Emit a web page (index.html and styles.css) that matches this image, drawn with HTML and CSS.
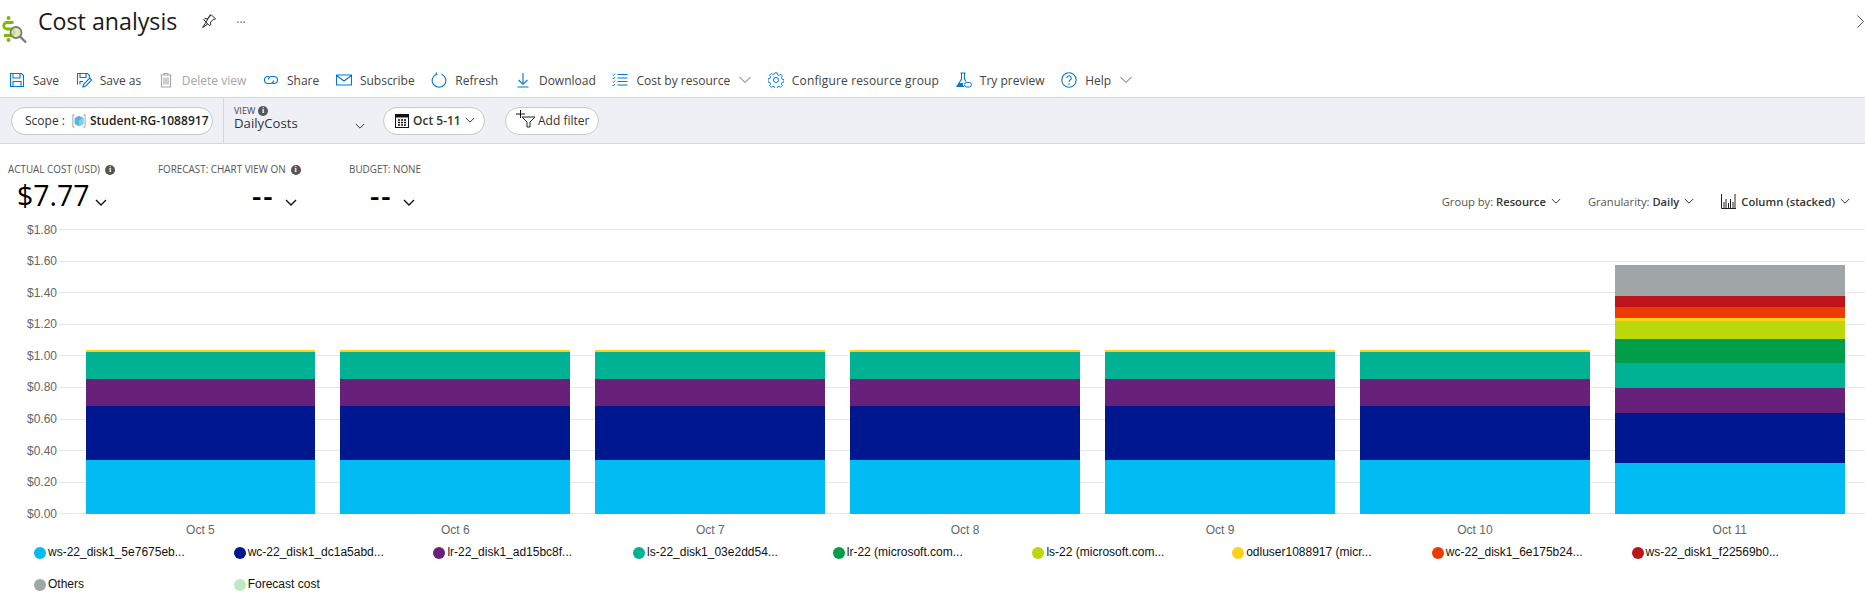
FILE: index.html
```html
<!DOCTYPE html>
<html lang="en">
<head>
<meta charset="utf-8">
<title>Cost analysis</title>
<link rel="stylesheet" href="styles.css">
</head>
<body>
<header class="title-row">
  <svg class="logo" viewBox="0 0 28 32" width="28" height="32">
    <path d="M11.500 8.500H5a3 3 0 0 0 0 6.500h4a3.200 3.200 0 0 1 0 6.500H2" fill="none" stroke="#7fba00" stroke-width="2.800"/>
    <circle cx="6.500" cy="4" r="2" fill="#7fba00"/>
    <circle cx="6.500" cy="26" r="2" fill="#7fba00"/>
    <circle cx="14" cy="18.500" r="5.500" fill="#d7e8a8" fill-opacity=".8" stroke="#7a7a7a" stroke-width="1.800"/>
    <path d="M18 22.500l6 6" stroke="#7a7a7a" stroke-width="2.400"/>
  </svg>
  <h1 class="title">Cost analysis</h1>
  <svg class="pin" viewBox="0 0 16 16" width="16" height="16"><path d="M10 1.500l4.500 4.500-1 .6-1-.4-3 3 .2 2.600-1 1L5 9.200 1.600 14.500 6.800 11 M5 9.200l-2.200-2.600 1-1 2.700.2 3-3-.3-1z" fill="none" stroke="#222" stroke-width="1"/></svg>
  <span class="more">···</span>
  <svg class="close" viewBox="0 0 7 13" width="7" height="13"><path d="M.5.500l6 6-6 6" fill="none" stroke="#555" stroke-width="1"/></svg>
</header>

<nav class="toolbar">
  <span class="tool"><svg class="ti" viewBox="0 0 16 16"><path d="M1.500 1.500h11l2 2v11h-13zM4 1.500v4.500h7V1.500M4 14.500V9.500h8v5" fill="none" stroke="#0078d4" stroke-width="1.100"/></svg>Save</span>
  <span class="tool"><svg class="ti" viewBox="0 0 16 16"><path d="M1.500 12.500v-11h10l2 2v3M4 1.500v4h6v-4M4 12.500v-3h3" fill="none" stroke="#0078d4" stroke-width="1.100"/><path d="M7 15l.8-3 6-6 2 2-6 6z" fill="none" stroke="#0078d4" stroke-width="1.100"/></svg>Save as</span>
  <span class="tool off"><svg class="ti" viewBox="0 0 16 16"><path d="M2.500 3h11M6 3V1.500h4V3M3.500 3v12h9V3M6 5.500v7M8 5.500v7M10 5.500v7" fill="none" stroke="#a6a6a6" stroke-width="1.100"/></svg>Delete view</span>
  <span class="tool"><svg class="ti" viewBox="0 0 16 16"><path d="M6 4.500H5a3.500 3.500 0 0 0 0 7h2.500a3 3 0 0 0 3-3M10 11.500h1a3.500 3.500 0 0 0 0-7H8.500a3 3 0 0 0-3 3" fill="none" stroke="#0078d4" stroke-width="1.100"/></svg>Share</span>
  <span class="tool"><svg class="ti" viewBox="0 0 16 16"><path d="M.5 3h15v10H.5zM.5 3.500L8 9l7.500-5.500" fill="none" stroke="#0078d4" stroke-width="1.100"/></svg>Subscribe</span>
  <span class="tool"><svg class="ti" viewBox="0 0 16 16"><path d="M5.500 2.200a6.800 6.800 0 1 0 5 0M5 .5l.8 2-2 .8" fill="none" stroke="#0078d4" stroke-width="1.100"/></svg>Refresh</span>
  <span class="tool"><svg class="ti" viewBox="0 0 16 16"><path d="M8 1v11M3.500 8L8 12.300 12.500 8M2.500 15h11" fill="none" stroke="#0078d4" stroke-width="1.100"/></svg>Download</span>
  <span class="tool"><svg class="ti" viewBox="0 0 16 16"><path d="M5.500 2.500h10M5.500 6h10M5.500 9.500h10M5.500 13h10" fill="none" stroke="#0078d4" stroke-width="1.200"/><path d="M.5 2.500l1 1 1.500-2M.5 6l1 1 1.500-2M.5 9.500l1 1 1.500-2M.5 13l1 1 1.500-2" fill="none" stroke="#0078d4" stroke-width=".9"/></svg>Cost by resource<svg class="chev" viewBox="0 0 12 8"><path d="M.5 1L6 6.500 11.500 1" fill="none" stroke="#666" stroke-width="1"/></svg></span>
  <span class="tool wide"><svg class="ti" viewBox="0 0 16 16"><circle cx="8" cy="8" r="2.500" fill="none" stroke="#0078d4"/><path d="M6.800 .8h2.400l.4 2 1.500.6 1.700-1.100 1.700 1.700-1.100 1.700.6 1.500 2 .4v2.400l-2 .4-.6 1.500 1.100 1.700-1.700 1.700-1.700-1.100-1.500.6-.4 2H6.800l-.4-2-1.500-.6-1.700 1.100-1.700-1.700 1.100-1.700-.6-1.500-2-.4V6.800l2-.4.6-1.500-1.100-1.700 1.700-1.700 1.700 1.100 1.500-.6z" fill="none" stroke="#0078d4" stroke-width=".9"/></svg>Configure resource group</span>
  <span class="tool"><svg class="ti" viewBox="0 0 16 16"><path d="M4.500 1h5M5.500 1v6L1 14.500h7" fill="none" stroke="#0078d4" stroke-width="1.100"/><path d="M8.500 1v6l1.500 2.500" fill="none" stroke="#0078d4" stroke-width="1.100"/><path d="M3 11h4v3.500H1.500z" fill="#0078d4"/><rect x="8.500" y="10.500" width="7" height="4.500" rx="2.200" fill="none" stroke="#0078d4"/></svg>Try preview</span>
  <span class="tool"><svg class="ti" viewBox="0 0 16 16"><circle cx="8" cy="8" r="7.200" fill="none" stroke="#0078d4" stroke-width="1.100"/><path d="M5.800 6a2.200 2.200 0 1 1 3.400 1.900C8.400 8.400 8 8.900 8 10" fill="none" stroke="#0078d4" stroke-width="1.100"/><circle cx="8" cy="12" r=".8" fill="#0078d4"/></svg>Help<svg class="chev" viewBox="0 0 12 8"><path d="M.5 1L6 6.500 11.500 1" fill="none" stroke="#666" stroke-width="1"/></svg></span>
</nav>

<section class="filters">
  <div class="pill scope">Scope :<svg class="cube" viewBox="0 0 16 16" width="14" height="14"><path d="M3 1H1v14h2M13 1h2v14h-2" fill="none" stroke="#999"/><path d="M8 2l5 2.500v7L8 14l-5-2.500v-7z" fill="#59b4d9"/><path d="M8 7v7l5-2.500v-7z" fill="#7fd0ea"/></svg><b>Student-RG-1088917</b></div>
  <div class="view">
    <div class="view-label">VIEW <i class="info">i</i></div>
    <div class="view-name"><span>DailyCosts</span><svg class="chev" viewBox="0 0 12 8"><path d="M1 1l5 5 5-5" fill="none" stroke="#333" stroke-width="1.200"/></svg></div>
  </div>
  <div class="pill date"><svg class="cal" viewBox="0 0 14 14" width="14" height="14"><rect x=".5" y=".5" width="13" height="13" fill="#fff" stroke="#111"/><rect x=".5" y=".5" width="13" height="3" fill="#111"/><path d="M3 6h2M6 6h2M9 6h2M3 8.500h2M6 8.500h2M9 8.500h2M3 11h2M6 11h2M9 11h2" stroke="#111" stroke-width="1.400"/></svg>Oct 5-11<svg class="chev" viewBox="0 0 12 8"><path d="M1 1l5 5 5-5" fill="none" stroke="#333" stroke-width="1.200"/></svg></div>
  <div class="pill add"><svg class="filt" viewBox="0 0 20 18" width="20" height="18"><path d="M0 4h9M4.500 0v8" stroke="#111" stroke-width="1"/><path d="M6 7h13l-5 5v5h-3v-5z" fill="none" stroke="#222"/></svg>Add filter</div>
</section>

<section class="kpis">
  <div class="kpi k1">
    <div class="kpi-label">ACTUAL COST (USD) <i class="info">i</i></div>
    <div class="kpi-value big">$7.77<svg class="kchev" viewBox="0 0 12 8"><path d="M1 1l5 5 5-5" fill="none" stroke="#111" stroke-width="1.400"/></svg></div>
  </div>
  <div class="kpi k2">
    <div class="kpi-label">FORECAST: CHART VIEW ON <i class="info">i</i></div>
    <div class="kpi-value dash">--<svg class="kchev" viewBox="0 0 12 8"><path d="M1 1l5 5 5-5" fill="none" stroke="#111" stroke-width="1.400"/></svg></div>
  </div>
  <div class="kpi k3">
    <div class="kpi-label">BUDGET: NONE</div>
    <div class="kpi-value dash">--<svg class="kchev" viewBox="0 0 12 8"><path d="M1 1l5 5 5-5" fill="none" stroke="#111" stroke-width="1.400"/></svg></div>
  </div>
  <div class="options">
    <span class="opt">Group by: <b>Resource</b><svg class="chev" viewBox="0 0 12 8"><path d="M1 1l5 5 5-5" fill="none" stroke="#333" stroke-width="1.200"/></svg></span>
    <span class="opt">Granularity: <b>Daily</b><svg class="chev" viewBox="0 0 12 8"><path d="M1 1l5 5 5-5" fill="none" stroke="#333" stroke-width="1.200"/></svg></span>
    <span class="opt"><svg class="colic" viewBox="0 0 15 15" width="15" height="15"><path d="M.5 0v14.500H15M3 8v6M5 5v9M7.500 9v5M9.500 5v9M12 8v6M14 0v14" fill="none" stroke="#222" stroke-width="1"/></svg><b>Column (stacked)</b><svg class="chev" viewBox="0 0 12 8"><path d="M1 1l5 5 5-5" fill="none" stroke="#333" stroke-width="1.200"/></svg></span>
  </div>
</section>

<section class="chart">
  <div class="yaxis">
    <span>$1.80</span><span>$1.60</span><span>$1.40</span><span>$1.20</span><span>$1.00</span><span>$0.80</span><span>$0.60</span><span>$0.40</span><span>$0.20</span><span>$0.00</span>
  </div>
  <div class="plot">
    <div class="bar"><i class="c-y" style="height:2px"></i><i class="c-t" style="height:27px"></i><i class="c-p" style="height:27px"></i><i class="c-n" style="height:54px"></i><i class="c-c" style="height:54px"></i></div>
    <div class="bar"><i class="c-y" style="height:2px"></i><i class="c-t" style="height:27px"></i><i class="c-p" style="height:27px"></i><i class="c-n" style="height:54px"></i><i class="c-c" style="height:54px"></i></div>
    <div class="bar"><i class="c-y" style="height:2px"></i><i class="c-t" style="height:27px"></i><i class="c-p" style="height:27px"></i><i class="c-n" style="height:54px"></i><i class="c-c" style="height:54px"></i></div>
    <div class="bar"><i class="c-y" style="height:2px"></i><i class="c-t" style="height:27px"></i><i class="c-p" style="height:27px"></i><i class="c-n" style="height:54px"></i><i class="c-c" style="height:54px"></i></div>
    <div class="bar"><i class="c-y" style="height:2px"></i><i class="c-t" style="height:27px"></i><i class="c-p" style="height:27px"></i><i class="c-n" style="height:54px"></i><i class="c-c" style="height:54px"></i></div>
    <div class="bar"><i class="c-y" style="height:2px"></i><i class="c-t" style="height:27px"></i><i class="c-p" style="height:27px"></i><i class="c-n" style="height:54px"></i><i class="c-c" style="height:54px"></i></div>
    <div class="bar"><i class="c-g" style="height:31px"></i><i class="c-r" style="height:11px"></i><i class="c-o" style="height:11px"></i><i class="c-y" style="height:3px"></i><i class="c-l" style="height:18px"></i><i class="c-d" style="height:24px"></i><i class="c-t" style="height:25px"></i><i class="c-p" style="height:25px"></i><i class="c-n" style="height:50px"></i><i class="c-c" style="height:51px"></i></div>
  </div>
</section>

<div class="xaxis"><span>Oct 5</span><span>Oct 6</span><span>Oct 7</span><span>Oct 8</span><span>Oct 9</span><span>Oct 10</span><span>Oct 11</span></div>

<div class="legend">
  <span class="lg"><i class="c-c"></i>ws-22_disk1_5e7675eb...</span>
  <span class="lg"><i class="c-n"></i>wc-22_disk1_dc1a5abd...</span>
  <span class="lg"><i class="c-p"></i>lr-22_disk1_ad15bc8f...</span>
  <span class="lg"><i class="c-t"></i>ls-22_disk1_03e2dd54...</span>
  <span class="lg"><i class="c-d"></i>lr-22 (microsoft.com...</span>
  <span class="lg"><i class="c-l"></i>ls-22 (microsoft.com...</span>
  <span class="lg"><i class="c-y"></i>odluser1088917 (micr...</span>
  <span class="lg"><i class="c-o"></i>wc-22_disk1_6e175b24...</span>
  <span class="lg"><i class="c-r"></i>ws-22_disk1_f22569b0...</span>
  <span class="lg"><i class="c-g"></i>Others</span>
  <span class="lg"><i class="c-f"></i>Forecast cost</span>
</div>
</body>
</html>
```

FILE: styles.css
```css
* { box-sizing: border-box; }
html, body { margin: 0; padding: 0; background: #fff; overflow: hidden; }
body { width: 1865px; height: 613px; font-family: "Open Sans", "Noto Sans", sans-serif; color: #323130; }
svg { display: block; flex: none; }

.title-row { height: 63px; display: flex; align-items: flex-start; padding: 6px 1px 0 2px; }
.logo { margin-top: 8px; }
.title { margin: -3px 0 0 8px; font-size: 23.200px; line-height: 36px; font-weight: 400; color: #1b1a19; }
.pin { margin: 7px 0 0 24px; }
.more { margin: 8px 0 0 19px; font-size: 12px; color: #666; }
.close { margin: 9px 0 0 auto; }

.toolbar { height: 34px; display: flex; align-items: center; padding-left: 9px; gap: 16.700px; }
.tool { display: flex; align-items: center; font-size: 12px; color: #444; white-space: nowrap; }
.tool .ti { width: 16px; height: 16px; margin-right: 8px; }
.tool.off { color: #a6a6a6; }
.tool.wide { letter-spacing: .15px; }
.tool .chev { width: 12px; height: 8px; margin-left: 9px; }

.filters { height: 47px; display: flex; align-items: center; background: #eff0f6; border-top: 1px solid #d6d6d6; border-bottom: 1px solid #d6d6d6; padding-left: 11px; }
.pill { height: 28px; display: flex; align-items: center; border: 1px solid #c8c8c8; border-radius: 14px; background: #fff; font-size: 12px; white-space: nowrap; color: #333; }
.scope { width: 202px; padding-left: 13px; }
.cube { margin: 0 4px 0 7px; }
.scope b { font-weight: 600; font-size: 12px; letter-spacing: .05px; color: #222; }
.view { width: 142px; height: 100%; margin-left: 10px; padding: 7px 0 0 10px; border-left: 1px solid #d6d6d6; }
.view-label { display: flex; align-items: center; gap: 3px; font-size: 9px; line-height: 11px; color: #444; }
.view-name { display: flex; align-items: center; justify-content: space-between; font-size: 13.200px; line-height: 15px; color: #333; }
.view-name .chev { width: 10px; height: 7px; margin-top: 5px; }
.date { width: 102px; margin-left: 18px; padding-left: 11px; font-weight: 600; }
.date .cal { margin-right: 4px; }
.date .chev { width: 10px; height: 7px; margin-left: 4px; }
.add { width: 94px; margin-left: 20px; padding-left: 10px; }
.filt { margin: -4px 2px 0 0; }
.info { display: inline-flex; align-items: center; justify-content: center; width: 10px; height: 10px; border-radius: 50%; background: #555; color: #fff; font: 700 8px/10px "Liberation Serif", serif; }

.kpis { height: 85px; display: flex; align-items: flex-start; padding: 19px 0 0 8px; }
.kpi-label { display: flex; align-items: center; gap: 5px; font-size: 9.900px; line-height: 13px; color: #555; white-space: nowrap; }
.kpi-value { display: flex; align-items: flex-end; color: #000; line-height: 36px; margin-top: 1px; }
.kpi-value.big { font-size: 28.500px; padding-left: 9px; }
.kpi-value.dash { font-size: 29px; font-weight: 600; letter-spacing: 2px; padding-left: 94px; }
.kchev { width: 12px; height: 8px; margin: 0 0 6px 5px; }
.dash .kchev { margin-left: 10px; }
.k1 { width: 150px; }
.k2 { width: 191px; }
.k3 .kpi-value.dash { padding-left: 21px; }
.options { display: flex; gap: 27px; margin: 31px 15px 0 auto; }
.opt { display: flex; align-items: center; font-size: 11.200px; color: #555; white-space: pre; }
.opt b { font-weight: 600; color: #333; }
.opt .chev { width: 10px; height: 7px; margin-left: 5px; }
.colic { margin-right: 5px; }

.chart { display: flex; height: 285px; }
.yaxis { width: 59px; height: 298.400px; margin-top: -6.500px; display: flex; flex-direction: column; justify-content: space-between; align-items: flex-end; padding-right: 2px; font: 12px/14px "Liberation Sans", sans-serif; color: #666; }
.plot { flex: 1; height: 285.400px; display: flex; align-items: flex-end; gap: 25px; padding: 0 0 0 26.500px; background-image: repeating-linear-gradient(to bottom, #e6e6e6 0, #e6e6e6 1px, transparent 1px, transparent 31.600px); }
.bar { width: 229.900px; display: flex; flex-direction: column; }
.bar i { display: block; }

.c-c { background: #01bbf3; }
.c-n { background: #00188f; }
.c-p { background: #68217a; }
.c-t { background: #00b294; }
.c-d { background: #009e49; }
.c-l { background: #bad80a; }
.c-y { background: #fcd116; }
.c-o { background: #ec3b00; }
.c-r { background: #bc141a; }
.c-g { background: #a0a5a8; }
.c-f { background: #bdeac3; }

.xaxis { display: flex; padding-left: 73px; height: 31px; padding-top: 8px; font: 12px/16px "Liberation Sans", sans-serif; color: #666; }
.xaxis span { width: 254.900px; text-align: center; }

.legend { display: flex; flex-wrap: wrap; row-gap: 17px; padding-left: 34px; }
.lg { width: 199.700px; display: flex; align-items: center; gap: 2px; font: 12px/15px "Liberation Sans", sans-serif; color: #111; white-space: nowrap; }
.lg i { width: 12px; height: 12px; border-radius: 50%; }
```
